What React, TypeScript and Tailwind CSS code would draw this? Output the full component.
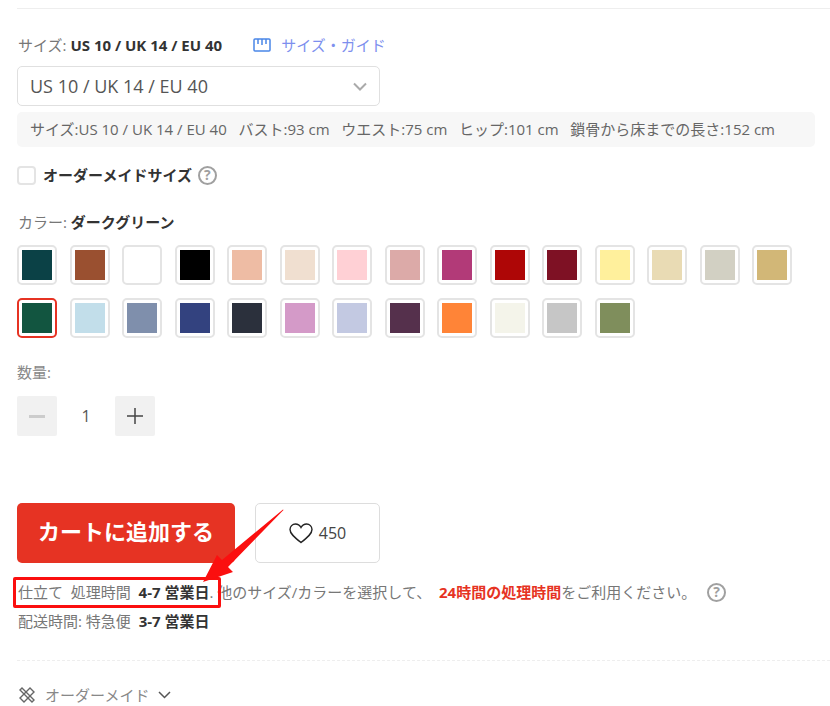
import React from "react";

const row1 = ["#0b4146","#9a5030","#ffffff","#000000","#eebca4","#f0dfd0","#ffd0d5","#dcaaa8","#b23a78","#ae0606","#7e1124","#fff09c","#e9dbb4","#d2d0c3","#d2b777"];
const row2 = ["#125540","#c2deea","#7f8fac","#33427f","#2b303c","#d49ac8","#c3c9e2","#55304c","#ff8437","#f4f4ea","#c6c6c6","#7f8e5c"];
const font = { fontFamily: '"Open Sans","Noto Sans CJK JP",sans-serif' };

function Help({ className }: { className: string }) {
  return (
    <span className={`inline-flex items-center justify-center w-[19px] h-[19px] rounded-full border-2 border-[#a0a0a0] text-[14px] font-bold leading-none text-[#a0a0a0] ${className}`}>?</span>
  );
}

function Swatch({ c, selected }: { c: string; selected?: boolean }) {
  return (
    <div className={`w-10 h-10 rounded-[5px] border-2 flex items-center justify-center bg-white ${selected ? "border-[#e63323]" : "border-[#e4e4e4]"}`}>
      <div className="w-[30px] h-[30px] shrink-0" style={{ backgroundColor: c }} />
    </div>
  );
}

export default function App() {
  return (
    <div className="relative w-[830px] h-[706px] overflow-hidden bg-white pl-[17px] text-[#666]" style={font}>
      <div className="h-[9px] border-b border-[#eeeeee]" />
      <div className="flex items-center h-[20px] mt-[26px] text-[15px]">
        <span className="text-[#777] ml-px">サイズ:&nbsp;</span>
        <b className="text-[#333]">US 10 / UK 14 / EU 40</b>
        <svg className="ml-[31px]" width="18" height="14" viewBox="0 0 18 14" fill="none" stroke="#4a86e8" strokeWidth="1.5">
          <rect x="1" y="1" width="16" height="12" rx="1" />
          <path d="M5 1v5M9 1v6M13 1v5" />
        </svg>
        <span className="ml-[10px] text-[#7d8fee]">サイズ・ガイド</span>
      </div>
      <div className="flex items-center justify-between w-[363px] h-10 mt-[11px] pl-3 pr-[12px] border border-[#e0e0e0] rounded-[5px] bg-white">
        <span className="text-[18px] text-[#555]">US 10 / UK 14 / EU 40</span>
        <svg width="14" height="9" viewBox="0 0 14 9" fill="none" stroke="#aaa" strokeWidth="2"><path d="M1 1.5l6 6 6-6" /></svg>
      </div>
      <div className="flex items-center w-[798px] h-[35px] mt-[6px] pl-[13px] rounded-[5px] bg-[#f7f7f7] text-[15px] whitespace-pre text-[#666]">
        サイズ:US 10 / UK 14 / EU 40{"   "}バスト:93 cm{"   "}ウエスト:75 cm{"   "}ヒップ:101 cm{"   "}鎖骨から床までの長さ:152 cm
      </div>
      <div className="flex items-center h-[20px] mt-[18px] text-[15px]">
        <span className="w-[19px] h-[19px] rounded-[4px] border-2 border-[#e4e4e4]" />
        <b className="ml-[7px] text-[#333]">オーダーメイドサイズ</b>
        <Help className="ml-[6px]" />
      </div>
      <div className="flex items-center h-[20px] mt-[27px] text-[15px]">
        <span className="text-[#777] ml-px">カラー:&nbsp;</span>
        <b className="text-[#333]">ダークグリーン</b>
      </div>
      <div className="flex flex-wrap gap-x-[12.5px] gap-y-[13px] mt-[13px] w-[800px]">
        {row1.map((c, i) => <Swatch key={i} c={c} />)}
        {row2.map((c, i) => <Swatch key={i} c={c} selected={i === 0} />)}
      </div>
      <div className="h-[20px] mt-6 text-[15px] leading-[20px] text-[#888]">数量:</div>
      <div className="flex items-center mt-[14px]">
        <div className="flex items-center justify-center w-10 h-10 rounded-[2px] bg-[#f1f1f1]">
          <span className="w-4 h-[3px] bg-[#ccc]" />
        </div>
        <span className="w-[58px] text-center text-base text-[#555]">1</span>
        <div className="flex items-center justify-center w-10 h-10 rounded-[2px] bg-[#f1f1f1]">
          <svg width="18" height="18" viewBox="0 0 18 18" stroke="#444" strokeWidth="1.5"><path d="M9 1v16M1 9h16" /></svg>
        </div>
      </div>
      <div className="flex mt-[67px]">
        <div className="flex items-center justify-center w-[218px] h-[60px] rounded-[5px] bg-[#e63323] text-white text-[22px] font-bold pb-[4px]">カートに追加する</div>
        <div className="flex items-center justify-center gap-[6px] w-[125px] h-[60px] ml-5 rounded-[5px] border border-[#ddd] text-base text-[#444]">
          <svg width="24" height="21" viewBox="0 0 24 21" fill="none" stroke="#222" strokeWidth="1.4"><path d="M12 19.5C5 14 1 10.5 1 6.5 1 3.5 3.400 1 6.400 1c2.300 0 4.400 1.300 5.600 3.500C13.200 2.300 15.300 1 17.600 1 20.600 1 23 3.500 23 6.500c0 4-4 7.500-11 13z" /></svg>
          450
        </div>
      </div>
      <div className="flex items-center h-[20px] mt-[19px] text-[15px] whitespace-pre text-[#777] w-[813px] ml-px">
        <span>仕立て  処理時間 </span>
        <b className="text-[#333]"> 4-7 営業日</b>
        <span>. 他のサイズ/カラーを選択して、 </span>
        <b className="text-[#e63323]"> 24時間の処理時間</b>
        <span>をご利用ください。</span>
        <Help className="ml-[11px]" />
      </div>
      <div className="flex items-center h-[20px] mt-[9px] text-[15px] whitespace-pre text-[#777] ml-px">
        <span>配送時間: 特急便 </span>
        <b className="text-[#333]"> 3-7 営業日</b>
      </div>
      <div className="mt-[29px] border-t border-dashed border-[#eeeeee]" />
      <div className="flex items-center h-[20px] mt-[24px] text-[15px] text-[#888]">
        <svg className="ml-px" width="18" height="18" viewBox="0 0 18 18" fill="none" stroke="#666" strokeWidth="1.4">
          <path d="M2 12L12 2l4 4L6 16z" />
          <path d="M4 2l12 12-2 2L2 4z" />
        </svg>
        <span className="ml-[9px]">オーダーメイド</span>
        <svg className="ml-[9px]" width="13" height="8" viewBox="0 0 13 8" fill="none" stroke="#555" strokeWidth="1.5"><path d="M1 1l5.500 5.500L12 1" /></svg>
      </div>

      <div className="absolute left-[13px] top-[577px] w-[208px] h-[31px] border-[3px] border-[#fb0f0f] rounded-[2px]" />
      <svg className="absolute left-[195px] top-[505px]" width="95" height="85" viewBox="0 0 95 85" fill="#fb0f0f">
        <path d="M88.500 5 L33 62 L38 67 L8 77 L22 50 L27 55 L88 4.500 Z" />
      </svg>
    </div>
  );
}
